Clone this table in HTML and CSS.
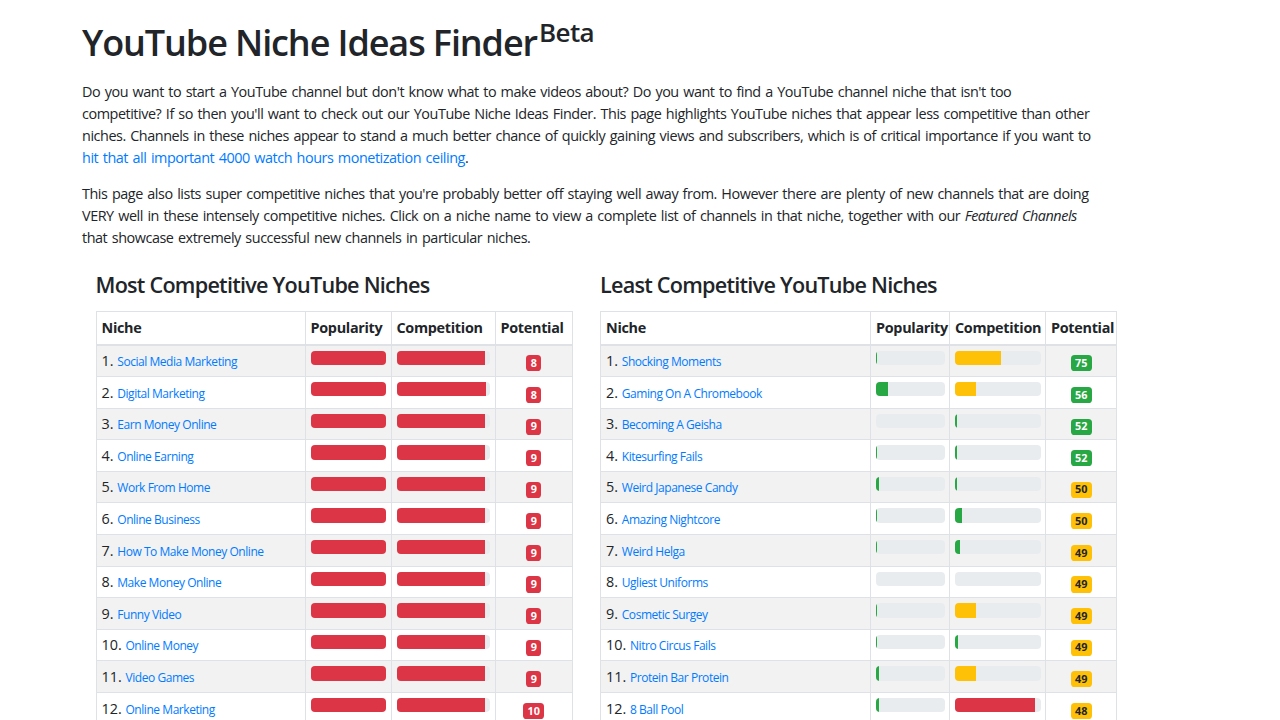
FILE: index.html
```html
<!DOCTYPE html>
<html lang="en">
<head>
<meta charset="utf-8">
<title>YouTube Niche Ideas Finder</title>
<link rel="stylesheet" href="styles.css">
</head>
<body>
<div class="container">
  <h1 class="title">YouTube Niche Ideas Finder<sup class="beta">Beta</sup></h1>
  <p class="intro">Do you want to start a YouTube channel but don't know what to make videos about? Do you want to find a YouTube channel niche that isn't too competitive? If so then you'll want to check out our YouTube Niche Ideas Finder. This page highlights YouTube niches that appear less competitive than other niches. Channels in these niches appear to stand a much better chance of quickly gaining views and subscribers, which is of critical importance if you want to <a href="#">hit that all important 4000 watch hours monetization ceiling</a>.</p>
  <p class="intro">This page also lists super competitive niches that you're probably better off staying well away from. However there are plenty of new channels that are doing VERY well in these intensely competitive niches. Click on a niche name to view a complete list of channels in that niche, together with our <em>Featured Channels</em> that showcase extremely successful new channels in particular niches.</p>

  <div class="columns">
    <section class="col">
      <h3 class="section-title">Most Competitive YouTube Niches</h3>
      <table class="niche-table most">
        <colgroup><col class="c-niche"><col class="c-pop"><col class="c-comp"><col class="c-pot"></colgroup>
        <thead><tr><th>Niche</th><th>Popularity</th><th>Competition</th><th>Potential</th></tr></thead>
        <tbody>
          <tr><td>1. <a href="#"><small>Social Media Marketing</small></a></td><td><div class="progress"><div class="bar red" style="width:100%"></div></div></td><td><div class="progress"><div class="bar red" style="width:95%"></div></div></td><td class="pot"><span class="badge red">8</span></td></tr>
          <tr><td>2. <a href="#"><small>Digital Marketing</small></a></td><td><div class="progress"><div class="bar red" style="width:100%"></div></div></td><td><div class="progress"><div class="bar red" style="width:96%"></div></div></td><td class="pot"><span class="badge red">8</span></td></tr>
          <tr><td>3. <a href="#"><small>Earn Money Online</small></a></td><td><div class="progress"><div class="bar red" style="width:100%"></div></div></td><td><div class="progress"><div class="bar red" style="width:95%"></div></div></td><td class="pot"><span class="badge red">9</span></td></tr>
          <tr><td>4. <a href="#"><small>Online Earning</small></a></td><td><div class="progress"><div class="bar red" style="width:100%"></div></div></td><td><div class="progress"><div class="bar red" style="width:95%"></div></div></td><td class="pot"><span class="badge red">9</span></td></tr>
          <tr><td>5. <a href="#"><small>Work From Home</small></a></td><td><div class="progress"><div class="bar red" style="width:100%"></div></div></td><td><div class="progress"><div class="bar red" style="width:95%"></div></div></td><td class="pot"><span class="badge red">9</span></td></tr>
          <tr><td>6. <a href="#"><small>Online Business</small></a></td><td><div class="progress"><div class="bar red" style="width:100%"></div></div></td><td><div class="progress"><div class="bar red" style="width:95%"></div></div></td><td class="pot"><span class="badge red">9</span></td></tr>
          <tr><td>7. <a href="#"><small>How To Make Money Online</small></a></td><td><div class="progress"><div class="bar red" style="width:100%"></div></div></td><td><div class="progress"><div class="bar red" style="width:95%"></div></div></td><td class="pot"><span class="badge red">9</span></td></tr>
          <tr><td>8. <a href="#"><small>Make Money Online</small></a></td><td><div class="progress"><div class="bar red" style="width:100%"></div></div></td><td><div class="progress"><div class="bar red" style="width:95%"></div></div></td><td class="pot"><span class="badge red">9</span></td></tr>
          <tr><td>9. <a href="#"><small>Funny Video</small></a></td><td><div class="progress"><div class="bar red" style="width:100%"></div></div></td><td><div class="progress"><div class="bar red" style="width:95%"></div></div></td><td class="pot"><span class="badge red">9</span></td></tr>
          <tr><td>10. <a href="#"><small>Online Money</small></a></td><td><div class="progress"><div class="bar red" style="width:100%"></div></div></td><td><div class="progress"><div class="bar red" style="width:95%"></div></div></td><td class="pot"><span class="badge red">9</span></td></tr>
          <tr><td>11. <a href="#"><small>Video Games</small></a></td><td><div class="progress"><div class="bar red" style="width:100%"></div></div></td><td><div class="progress"><div class="bar red" style="width:95%"></div></div></td><td class="pot"><span class="badge red">9</span></td></tr>
          <tr><td>12. <a href="#"><small>Online Marketing</small></a></td><td><div class="progress"><div class="bar red" style="width:100%"></div></div></td><td><div class="progress"><div class="bar red" style="width:95%"></div></div></td><td class="pot"><span class="badge red">10</span></td></tr>
        </tbody>
      </table>
    </section>

    <section class="col">
      <h3 class="section-title">Least Competitive YouTube Niches</h3>
      <table class="niche-table least">
        <colgroup><col class="c-niche"><col class="c-pop"><col class="c-comp"><col class="c-pot"></colgroup>
        <thead><tr><th>Niche</th><th>Popularity</th><th>Competition</th><th>Potential</th></tr></thead>
        <tbody>
          <tr><td>1. <a href="#"><small>Shocking Moments</small></a></td><td><div class="progress"><div class="bar green" style="width:1%"></div></div></td><td><div class="progress"><div class="bar yellow" style="width:54%"></div></div></td><td class="pot"><span class="badge green">75</span></td></tr>
          <tr><td>2. <a href="#"><small>Gaming On A Chromebook</small></a></td><td><div class="progress"><div class="bar green" style="width:18%"></div></div></td><td><div class="progress"><div class="bar yellow" style="width:24%"></div></div></td><td class="pot"><span class="badge green">56</span></td></tr>
          <tr><td>3. <a href="#"><small>Becoming A Geisha</small></a></td><td><div class="progress"><div class="bar green" style="width:0%"></div></div></td><td><div class="progress"><div class="bar green" style="width:2%"></div></div></td><td class="pot"><span class="badge green">52</span></td></tr>
          <tr><td>4. <a href="#"><small>Kitesurfing Fails</small></a></td><td><div class="progress"><div class="bar green" style="width:1%"></div></div></td><td><div class="progress"><div class="bar green" style="width:2%"></div></div></td><td class="pot"><span class="badge green">52</span></td></tr>
          <tr><td>5. <a href="#"><small>Weird Japanese Candy</small></a></td><td><div class="progress"><div class="bar green" style="width:4%"></div></div></td><td><div class="progress"><div class="bar green" style="width:2%"></div></div></td><td class="pot"><span class="badge yellow">50</span></td></tr>
          <tr><td>6. <a href="#"><small>Amazing Nightcore</small></a></td><td><div class="progress"><div class="bar green" style="width:2%"></div></div></td><td><div class="progress"><div class="bar green" style="width:8%"></div></div></td><td class="pot"><span class="badge yellow">50</span></td></tr>
          <tr><td>7. <a href="#"><small>Weird Helga</small></a></td><td><div class="progress"><div class="bar green" style="width:1%"></div></div></td><td><div class="progress"><div class="bar green" style="width:6%"></div></div></td><td class="pot"><span class="badge yellow">49</span></td></tr>
          <tr><td>8. <a href="#"><small>Ugliest Uniforms</small></a></td><td><div class="progress"><div class="bar green" style="width:0%"></div></div></td><td><div class="progress"><div class="bar green" style="width:0%"></div></div></td><td class="pot"><span class="badge yellow">49</span></td></tr>
          <tr><td>9. <a href="#"><small>Cosmetic Surgey</small></a></td><td><div class="progress"><div class="bar green" style="width:1%"></div></div></td><td><div class="progress"><div class="bar yellow" style="width:24%"></div></div></td><td class="pot"><span class="badge yellow">49</span></td></tr>
          <tr><td>10. <a href="#"><small>Nitro Circus Fails</small></a></td><td><div class="progress"><div class="bar green" style="width:1%"></div></div></td><td><div class="progress"><div class="bar green" style="width:3%"></div></div></td><td class="pot"><span class="badge yellow">49</span></td></tr>
          <tr><td>11. <a href="#"><small>Protein Bar Protein</small></a></td><td><div class="progress"><div class="bar green" style="width:5%"></div></div></td><td><div class="progress"><div class="bar yellow" style="width:24%"></div></div></td><td class="pot"><span class="badge yellow">49</span></td></tr>
          <tr><td>12. <a href="#"><small>8 Ball Pool</small></a></td><td><div class="progress"><div class="bar green" style="width:4%"></div></div></td><td><div class="progress"><div class="bar red" style="width:94%"></div></div></td><td class="pot"><span class="badge yellow">48</span></td></tr>
        </tbody>
      </table>
    </section>
  </div>
</div>
</body>
</html>
```

FILE: styles.css
```css
* { box-sizing: border-box; }
html, body { margin: 0; padding: 0; background: #fff; }
body {
  font-family: "Open Sans", "Noto Sans", "Liberation Sans", sans-serif;
  font-size: 14.4px;
  line-height: 22px;
  color: #212529;
}
a { color: #007bff; text-decoration: none; }

.container {
  width: 1010px;
  margin-left: 82px;
}

.title {
  margin: 21px 0 17px;
  font-size: 36px;
  font-weight: 600;
  line-height: 43px;
  letter-spacing: -1.1px;
}
.beta {
  font-size: 26px;
  font-weight: 600;
  line-height: 0;
  vertical-align: 14px;
  letter-spacing: -0.6px;
  margin-left: 2px;
}

.intro {
  margin: 0 0 14px;
  letter-spacing: -0.45px;
  word-spacing: 1.2px;
}

.columns {
  display: flex;
  margin-top: 23px;
}
.col {
  width: 504.5px;
  padding: 0 13.5px;
  flex: none;
}

.section-title {
  margin: 0 0 13px;
  font-size: 21.6px;
  font-weight: 600;
  line-height: 26px;
  letter-spacing: -0.75px;
}

.niche-table {
  border-collapse: collapse;
  table-layout: fixed;
  border: 1px solid #dee2e6;
}
.niche-table.most { width: 476px; }
.niche-table.least { width: 516px; }
.most .c-niche { width: 209px; }
.most .c-pop { width: 86px; }
.most .c-comp { width: 104px; }
.most .c-pot { width: 77px; }
.least .c-niche { width: 270px; }
.least .c-pop { width: 79px; }
.least .c-comp { width: 96px; }
.least .c-pot { width: 71px; }

.niche-table th,
.niche-table td {
  padding: 4.5px 4.5px 4.5px 5px;
  border: 1px solid #dee2e6;
  vertical-align: top;
  text-align: left;
  line-height: 21.6px;
  height: 31.5px;
  white-space: nowrap;
}
.niche-table th {
  font-weight: 700;
  height: 33px;
  padding-top: 5px;
  border-bottom: 2px solid #dee2e6;
  letter-spacing: -0.3px;
}
.niche-table td > * { line-height: 1; }
.niche-table tbody tr:nth-child(odd) { background: #f2f2f2; }
.niche-table td small {
  font-size: 12px;
  letter-spacing: -0.45px;
  line-height: 1;
}

.progress {
  height: 14.4px;
  margin-top: 0.5px;
  background: #e9ecef;
  border-radius: 4px;
  overflow: hidden;
  display: flex;
}
.bar { height: 100%; }
.bar.red { background: #dc3545; }
.bar.green { background: #28a745; }
.bar.yellow { background: #ffc107; }

.niche-table td.pot { text-align: center; }
.badge {
  display: inline-block;
  padding: 2.7px 4.3px;
  font-size: 10.8px;
  font-weight: 700;
  line-height: 1;
  border-radius: 3.6px;
  vertical-align: -1px;
}
.badge.red { background: #dc3545; color: #fff; }
.badge.green { background: #28a745; color: #fff; }
.badge.yellow { background: #ffc107; color: #212529; }
```
